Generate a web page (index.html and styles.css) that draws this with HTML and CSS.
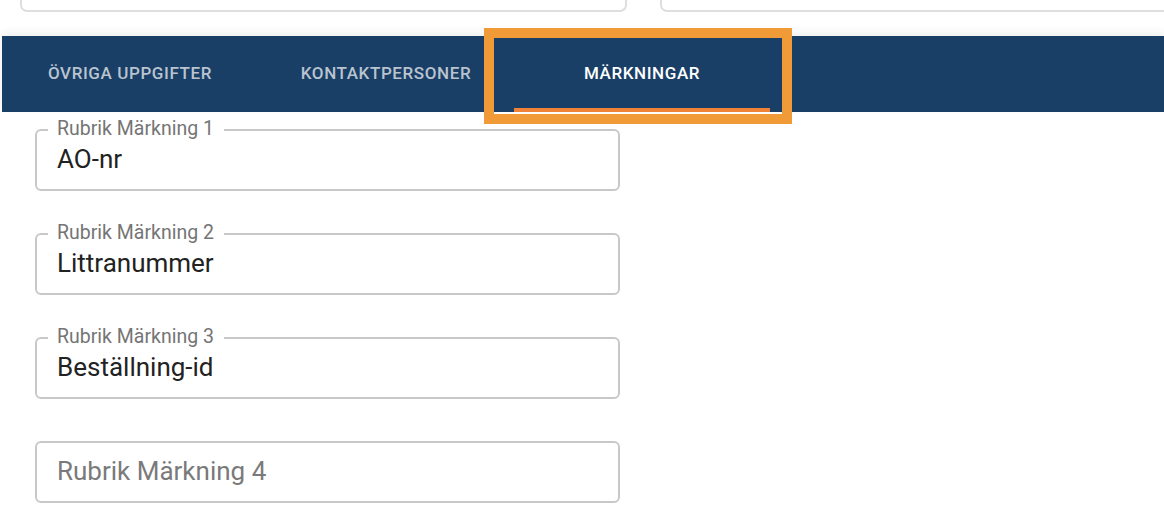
FILE: index.html
```html
<!DOCTYPE html>
<html lang="sv">
<head>
  <meta charset="UTF-8" />
  <meta name="viewport" content="width=device-width, initial-scale=1.0"/>
  <title>Märkningar</title>
  <link rel="stylesheet" href="styles.css">
</head>
<body>

  <div class="top-row">
    <div class="card card-left"></div>
    <div class="card card-right"></div>
  </div>

  <div class="tab-wrap">
    <nav class="tabs">
      <a class="tab">Övriga uppgifter</a>
      <a class="tab">Kontaktpersoner</a>
      <a class="tab active">Märkningar</a>
    </nav>
    <div class="highlight"></div>
  </div>

  <form class="fields">
    <div class="field">
      <label for="m1">Rubrik Märkning 1</label>
      <input type="text" id="m1" value="AO-nr">
    </div>
    <div class="field">
      <label for="m2">Rubrik Märkning 2</label>
      <input type="text" id="m2" value="Littranummer">
    </div>
    <div class="field">
      <label for="m3">Rubrik Märkning 3</label>
      <input type="text" id="m3" value="Beställning-id">
    </div>
    <div class="field">
      <input type="text" id="m4" placeholder="Rubrik Märkning 4">
    </div>
  </form>

</body>
</html>
```

FILE: styles.css
```css
body {
  margin: 0;
  background: #fff;
  font-family: Roboto, "Liberation Sans", sans-serif;
  overflow: hidden;
}
.top-row {
  display: flex;
  gap: 33px;
  padding-left: 20px;
  margin-right: -20px;
}
.card {
  height: 10px;
  border: 2px solid #dedede;
  border-top: none;
  border-radius: 0 0 7px 7px;
}
.card-left {
  width: 603px;
}
.card-right {
  flex: 1;
}
.tab-wrap {
  position: relative;
  margin-top: 24px;
}
.tabs {
  display: flex;
  height: 76px;
  margin-left: 2px;
  background: #193f66;
  box-shadow: 0 -4px 8px rgba(0,0,0,0.06);
}
.tab {
  position: relative;
  width: 256px;
  display: flex;
  align-items: center;
  justify-content: center;
  padding-bottom: 3px;
  box-sizing: border-box;
  color: #b9c4d0;
  font-size: 17px;
  font-weight: 500;
  letter-spacing: 0.6px;
  text-transform: uppercase;
  cursor: pointer;
}
.tab.active {
  color: #fff;
}
.tab.active::after {
  content: "";
  position: absolute;
  left: 0;
  right: 0;
  bottom: 0;
  height: 4px;
  background: #ef8236;
}
.highlight {
  position: absolute;
  left: 484px;
  top: -8px;
  width: 288px;
  height: 76px;
  border: 10px solid #f09a38;
}
.fields {
  padding: 17px 0 0 35px;
}
.field {
  position: relative;
  width: 585px;
  height: 62px;
  box-sizing: border-box;
  margin-bottom: 42px;
  border: 2px solid #c8c8c8;
  border-radius: 6px;
}
.field label {
  position: absolute;
  left: 11px;
  top: -12px;
  padding: 0 10px 0 9px;
  background: #fff;
  color: #757575;
  font-size: 19.5px;
  line-height: 20px;
}
.field input {
  width: 100%;
  height: 100%;
  box-sizing: border-box;
  padding: 0 20px 2px;
  border: none;
  background: transparent;
  outline: none;
  font-family: Roboto, "Liberation Sans", sans-serif;
  font-size: 26px;
  color: #222;
}
.field input::placeholder {
  color: #7a7a7a;
}
```
